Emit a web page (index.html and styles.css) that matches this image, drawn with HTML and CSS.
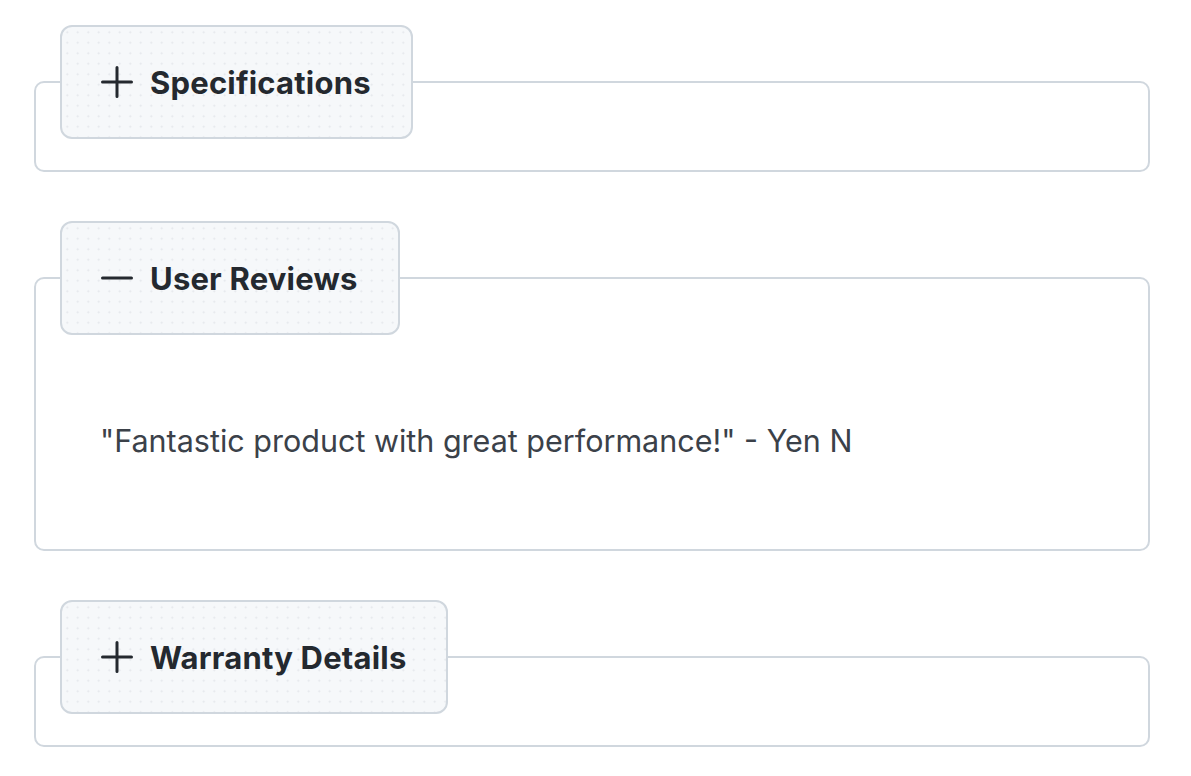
FILE: index.html
```html
<!DOCTYPE html>
<html lang="en">
<head>
<meta charset="utf-8">
<title>Product details</title>
<link rel="stylesheet" href="styles.css">
</head>
<body>
<main class="page">
  <fieldset class="panel">
    <legend class="panel-legend">
      <svg class="toggle-icon" viewBox="0 0 32 32" aria-hidden="true"><path d="M16 1.5V30.5M1.5 16H30.5"/></svg>
      <span class="panel-title">Specifications</span>
    </legend>
  </fieldset>

  <fieldset class="panel">
    <legend class="panel-legend">
      <svg class="toggle-icon" viewBox="0 0 32 32" aria-hidden="true"><path d="M1.5 16H30.5"/></svg>
      <span class="panel-title">User Reviews</span>
    </legend>
    <p class="panel-body">"Fantastic product with great performance!" - Yen N</p>
  </fieldset>

  <fieldset class="panel">
    <legend class="panel-legend">
      <svg class="toggle-icon" viewBox="0 0 32 32" aria-hidden="true"><path d="M16 1.5V30.5M1.5 16H30.5"/></svg>
      <span class="panel-title">Warranty Details</span>
    </legend>
  </fieldset>
</main>
</body>
</html>
```

FILE: styles.css
```css
* { box-sizing: border-box; }

html, body {
  margin: 0;
  padding: 0;
  background: #ffffff;
}

body {
  font-family: Inter, "Noto Sans", "Liberation Sans", sans-serif;
  color: #24292f;
}

.page {
  display: flex;
  flex-direction: column;
  gap: 49px;
  width: 1116px;
  margin-left: 34px;
  padding-top: 25px;
}

.panel {
  margin: 0;
  border: 2px solid #d0d7de;
  border-radius: 10px;
  padding: 0 24px 31px 24px;
  min-width: 0;
}

.panel-legend {
  display: flex;
  align-items: center;
  gap: 17px;
  height: 114px;
  padding: 0 40px 0 39px;
  background-color: #f6f8fa;
  background-image: radial-gradient(circle, #e3e6ea 0.8px, transparent 1.2px);
  background-size: 10.5px 10.5px;
  border: 2px solid #d0d7de;
  border-radius: 12px;
}

.toggle-icon {
  width: 32px;
  height: 32px;
  flex: none;
  fill: none;
  stroke: #24292f;
  stroke-width: 3;
  stroke-linecap: round;
}

.panel-title {
  font-size: 31px;
  font-weight: 700;
  letter-spacing: 0.2px;
  color: #24292f;
}

.panel-body {
  margin: 84px 0 55px 40px;
  font-size: 30.5px;
  line-height: 44px;
  color: #3b4149;
}
```
